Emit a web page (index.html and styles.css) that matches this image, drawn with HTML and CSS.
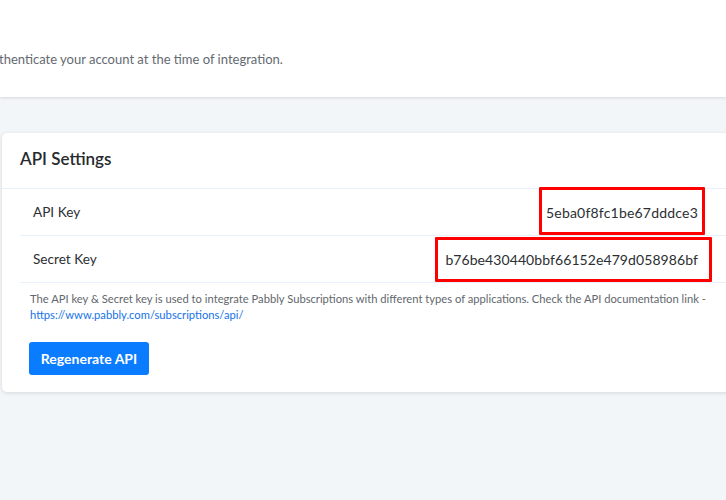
FILE: index.html
```html
<!DOCTYPE html>
<html lang="en">

<head>
  <meta charset="UTF-8">
  <meta name="viewport" content="width=device-width, initial-scale=1.0">
  <title>API Settings</title>
  <link rel="stylesheet" href="styles.css">
</head>

<body>
  <div class="top-panel">
    <p class="top-note">thenticate your account at the time of integration.</p>
  </div>

  <div class="page">
    <div class="card">
      <div class="card-header">
        <h2>API Settings</h2>
      </div>

      <div class="key-list">
        <div class="key-row">
          <span class="key-label">API Key</span>
          <span class="key-value mark-short">5eba0f8fc1be67dddce3</span>
        </div>
        <div class="key-row">
          <span class="key-label">Secret Key</span>
          <span class="key-value mark-long">b76be430440bbf66152e479d058986bf</span>
        </div>
      </div>

      <div class="card-footer">
        <p class="help-text">
          The API key &amp; Secret key is used to integrate Pabbly Subscriptions with different types of applications. Check the API documentation link -
          <a href="#">https://www.pabbly.com/subscriptions/api/</a>
        </p>
        <button class="btn-primary">Regenerate API</button>
      </div>
    </div>
  </div>
</body>

</html>
```

FILE: styles.css
```css
html {
  overflow: hidden;
}

body {
  margin: 0;
  font-family: Lato, "Open Sans", sans-serif;
  background-color: #f3f6f9;
  color: #333;
  width: 726px;
  height: 500px;
}

.top-panel {
  background: white;
  height: 97px;
  box-shadow: 0 1px 3px rgba(0, 0, 0, 0.12);
  position: relative;
  display: flex;
  align-items: center;
}

.top-note {
  margin: 20px 0 0 -1px;
  font-size: 13px;
  color: #646a71;
}

.page {
  padding: 36px 0 0 2px;
}

.card {
  width: 740px;
  background: white;
  border-radius: 5px 0 0 5px;
  box-shadow: 0 1px 4px rgba(0, 0, 0, 0.12);
}

.card-header {
  height: 50px;
  display: flex;
  align-items: center;
  padding: 0 0 5px 18px;
  border-bottom: 1px solid #e8f1fb;
}

.card-header h2 {
  margin: 0;
  font-size: 17px;
  font-weight: 600;
  color: #262a2e;
}

.key-list {
  margin-left: 18px;
}

.key-row {
  height: 46px;
  display: flex;
  align-items: center;
  justify-content: space-between;
  padding: 0 44px 0 13px;
  border-bottom: 1px solid #e8f1fb;
  font-size: 13.6px;
  color: #2b2f33;
}

.key-value {
  position: relative;
  font-size: 14px;
  letter-spacing: 0.2px;
}

.key-value.mark-long {
  letter-spacing: 0.08px;
}

/* red annotation boxes drawn over the values */
.key-value::after {
  content: "";
  position: absolute;
  border: 3px solid #f00;
  border-radius: 1px;
}

.mark-short::after {
  left: -7px;
  right: -7px;
  top: -17px;
  bottom: -14px;
}

.mark-long::after {
  left: -10px;
  right: -14px;
  top: -14px;
  bottom: -14px;
}

.card-footer {
  padding: 8px 0 17px 28px;
}

.help-text {
  margin: 0;
  font-size: 11.2px;
  line-height: 16px;
  color: #62676d;
}

.help-text a {
  color: #1573e6;
  text-decoration: none;
}

.btn-primary {
  margin-top: 19px;
  margin-left: -1px;
  background-color: #0a7cff;
  color: white;
  border: none;
  border-radius: 3px;
  width: 120px;
  height: 33px;
  font-family: inherit;
  font-size: 14px;
  font-weight: 700;
  cursor: pointer;
}
```
